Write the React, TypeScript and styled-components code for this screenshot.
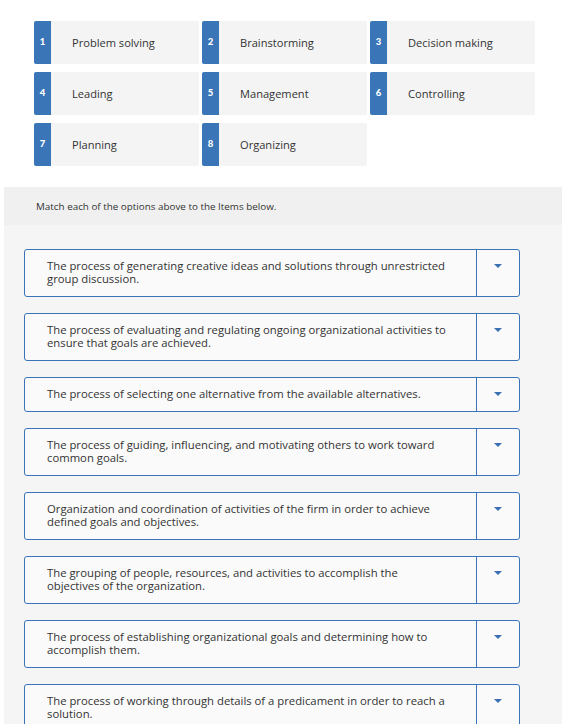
import React from "react";
import styled, { createGlobalStyle } from "styled-components";

const Global = createGlobalStyle`
  html, body { margin: 0; padding: 0; background: #ffffff; }
  body { font-family: "Open Sans", Lato, Arial, sans-serif; color: #333; }
`;

const Page = styled.div`
  width: 567px;
  height: 724px;
  overflow: hidden;
  display: flex;
  flex-direction: column;
`;

const OptionsGrid = styled.div`
  display: grid;
  grid-template-columns: repeat(3, 165px);
  column-gap: 3px;
  row-gap: 8px;
  padding: 21px 0 0 34px;
`;

const Tile = styled.div`
  display: flex;
  height: 43px;
  background: #f4f4f4;
  border-radius: 2px;
  overflow: hidden;
`;

const Badge = styled.div`
  width: 17px;
  flex: none;
  background: #3a75b8;
  color: #fff;
  font-family: Lato, "Open Sans", sans-serif;
  font-weight: 900;
  font-size: 9.5px;
  display: flex;
  align-items: center;
  justify-content: center;
  padding-bottom: 2px;
  box-sizing: border-box;
`;

const TileLabel = styled.div`
  display: flex;
  align-items: center;
  padding-left: 21px;
  padding-bottom: 1px;
  font-size: 11.1px;
  color: #333;
`;

const Section = styled.div`
  margin: 21px 0 0 4px;
  width: 558px;
  flex: 1;
  background: #f5f5f5;
  display: flex;
  flex-direction: column;
`;

const Instruction = styled.div`
  height: 38px;
  background: #f0f0f0;
  display: flex;
  align-items: center;
  padding-left: 32px;
  font-size: 9.85px;
  color: #333;
`;

const ItemList = styled.div`
  display: flex;
  flex-direction: column;
  gap: 16px;
  padding: 24px 0 0 20px;
`;

const Item = styled.div`
  width: 496px;
  box-sizing: border-box;
  display: flex;
  border: 1px solid #3a74b8;
  border-radius: 3px;
  background: #fafafa;
`;

const ItemText = styled.div`
  flex: 1;
  padding: 9px 26px 11px 22px;
  font-size: 11.3px;
  line-height: 13px;
  color: #333;
`;

const DropButton = styled.div`
  width: 43px;
  flex: none;
  border-left: 1px solid #3a74b8;
  display: flex;
  justify-content: center;
  padding-top: 14px;
  box-sizing: border-box;
`;

const Caret = styled.div`
  width: 0;
  height: 0;
  border-left: 4px solid transparent;
  border-right: 4px solid transparent;
  border-top: 4px solid #3a6fb3;
`;

const options = [
  "Problem solving",
  "Brainstorming",
  "Decision making",
  "Leading",
  "Management",
  "Controlling",
  "Planning",
  "Organizing",
];

const items = [
  "The process of generating creative ideas and solutions through unrestricted group discussion.",
  "The process of evaluating and regulating ongoing organizational activities to ensure that goals are achieved.",
  "The process of selecting one alternative from the available alternatives.",
  "The process of guiding, influencing, and motivating others to work toward common goals.",
  "Organization and coordination of activities of the firm in order to achieve defined goals and objectives.",
  "The grouping of people, resources, and activities to accomplish the objectives of the organization.",
  "The process of establishing organizational goals and determining how to accomplish them.",
  "The process of working through details of a predicament in order to reach a solution.",
];

export default function App() {
  return (
    <Page>
      <Global />
      <OptionsGrid>
        {options.map((o, i) => (
          <Tile key={o}>
            <Badge>{i + 1}</Badge>
            <TileLabel>{o}</TileLabel>
          </Tile>
        ))}
      </OptionsGrid>
      <Section>
        <Instruction>Match each of the options above to the Items below.</Instruction>
        <ItemList>
          {items.map((t) => (
            <Item key={t}>
              <ItemText>{t}</ItemText>
              <DropButton>
                <Caret />
              </DropButton>
            </Item>
          ))}
        </ItemList>
      </Section>
    </Page>
  );
}
